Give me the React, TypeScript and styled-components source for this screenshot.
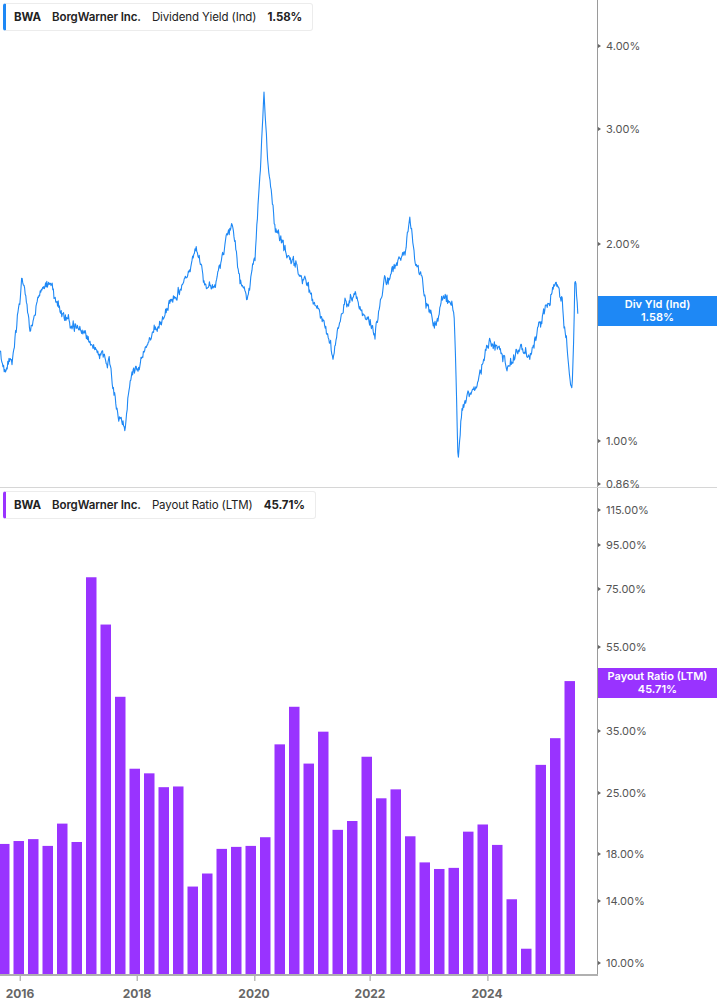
import React from 'react'
import styled, { createGlobalStyle } from 'styled-components'

const GlobalStyle = createGlobalStyle`
	html, body { margin: 0; padding: 0; background: #fff; }
	body { font-family: Inter, 'Liberation Sans', sans-serif; }
`

const BLUE = '#1e88f5'
const PURPLE = '#9933ff'

// log scales measured off the axes
const yTop = (v: number) => 441 - 284.2 * Math.log(v)
const yBot = (v: number) => 963 - 185.5 * Math.log(v / 10) - 488

const keyPoints: [number, number][] = [
	[0, 1.35], [5, 1.25], [12, 1.32], [22, 1.8], [30, 1.5], [40, 1.7], [50, 1.75], [60, 1.6],
	[75, 1.5], [90, 1.42], [100, 1.35], [110, 1.3], [118, 1.12], [125, 1.06], [130, 1.25],
	[140, 1.35], [150, 1.42], [160, 1.5], [170, 1.65], [180, 1.75], [190, 1.85], [195, 2.0],
	[205, 1.72], [215, 1.7], [225, 2.0], [232, 2.15], [240, 1.75], [248, 1.68], [255, 1.95],
	[261, 2.7], [264, 3.45], [268, 2.6], [275, 2.05], [285, 1.9], [295, 1.82], [305, 1.75],
	[315, 1.6], [325, 1.45], [333, 1.35], [345, 1.62], [355, 1.7], [365, 1.55], [375, 1.45],
	[385, 1.72], [395, 1.85], [405, 1.95], [410, 2.15], [415, 1.9], [425, 1.65], [435, 1.52],
	[445, 1.65], [454, 1.58], [458, 0.95], [462, 1.12], [470, 1.2], [480, 1.3], [490, 1.45],
	[500, 1.35], [510, 1.3], [520, 1.4], [530, 1.35], [540, 1.5], [550, 1.62], [556, 1.78],
	[562, 1.62], [568, 1.35], [572, 1.22], [574, 1.5], [575, 1.82], [578, 1.58],
]

function buildLine() {
	let seed = 11
	const rnd = () => {
		seed = (seed * 16807) % 2147483647
		return seed / 2147483647 - 0.5
	}
	const pts: string[] = []
	let walk = 0
	for (let x = 0; x <= 578; x += 0.6) {
		let i = 0
		while (i < keyPoints.length - 2 && keyPoints[i + 1][0] < x) i++
		const [x0, v0] = keyPoints[i]
		const [x1, v1] = keyPoints[i + 1]
		const t = Math.min(1, Math.max(0, (x - x0) / (x1 - x0)))
		const v = v0 + (v1 - v0) * t
		walk = walk * 0.9 + rnd() * 7
		const y = yTop(v) + walk + rnd() * 6
		pts.push(`${x.toFixed(1)},${y.toFixed(1)}`)
	}
	return 'M' + pts.join('L')
}

const barValues = [
	19.0, 19.3, 19.5, 18.8, 21.2, 19.2, 80, 62, 42, 28.5, 27.8, 25.8, 25.9, 15.1, 16.2, 18.5,
	18.7, 18.8, 19.7, 32.5, 39.8, 29.3, 34.8, 20.5, 21.5, 30.4, 24.3, 25.5, 19.8, 17.2, 16.6,
	16.7, 20.3, 21.1, 18.9, 14.1, 10.8, 29.1, 33.6, 45.71,
]

const topTicks = [
	{ label: '4.00%', y: 46 }, { label: '3.00%', y: 129 }, { label: '2.00%', y: 244 },
	{ label: '1.00%', y: 441 }, { label: '0.86%', y: 484 },
]
const botTicks = ['115.00%', '95.00%', '75.00%', '55.00%', '35.00%', '25.00%', '18.00%', '14.00%', '10.00%'].map(
	(l) => ({ label: l, y: yBot(parseFloat(l)) }),
)
const years = [
	{ label: '2016', x: 20 }, { label: '2018', x: 137 }, { label: '2020', x: 254 },
	{ label: '2022', x: 370 }, { label: '2024', x: 487 },
]

const Page = styled.div`
	width: 717px;
	height: 1005px;
	display: flex;
	flex-direction: column;
	overflow: hidden;
`

const Pane = styled.div<{ $h: number; $border?: boolean }>`
	display: grid;
	grid-template-columns: 598px 1fr;
	height: ${(p) => p.$h}px;
	border-bottom: ${(p) => (p.$border ? '1px solid #d6d6d6' : 'none')};
	flex-shrink: 0;
`

const Plot = styled.div`
	position: relative;
	border-right: 1px solid #9a9a9a;
`

const Axis = styled.div`
	position: relative;
`

const TickLabel = styled.div`
	position: absolute;
	left: 0;
	transform: translateY(-50%);
	display: flex;
	align-items: center;
	gap: 5px;
	font-size: 11px;
	color: #555;
	&::before {
		content: '';
		width: 0;
		height: 0;
		border-top: 2px solid transparent;
		border-bottom: 2px solid transparent;
		border-left: 3px solid #666;
	}
`

const ValueTag = styled.div<{ $bg: string }>`
	position: absolute;
	left: 0;
	right: 0;
	background: ${(p) => p.$bg};
	color: #fff;
	font-size: 11px;
	font-weight: 600;
	text-align: center;
	line-height: 13px;
	padding: 2px 0;
`

const Legend = styled.div<{ $c: string }>`
	position: absolute;
	top: 3px;
	left: 3px;
	display: flex;
	align-items: center;
	gap: 11px;
	height: 26px;
	padding: 0 10px 0 8px;
	background: #fff;
	border: 1px solid #ececec;
	border-left: 3px solid ${(p) => p.$c};
	border-radius: 3px;
	font-size: 11.5px;
	letter-spacing: -0.1px;
	color: #222;
`

const LegendItem = styled.span<{ $w: number }>`
	font-weight: ${(p) => p.$w};
	white-space: nowrap;
`

const Chart = styled.svg`
	position: absolute;
	inset: 0;
	display: block;
`

const TimeAxis = styled.div`
	position: relative;
	width: 598px;
	height: 30px;
	border-top: 2px solid #b0b0b0;
`

const YearLabel = styled.div`
	position: absolute;
	top: 10px;
	transform: translateX(-50%);
	font-size: 12px;
	font-weight: 700;
	color: #666;
	&::before {
		content: '';
		position: absolute;
		top: -10px;
		left: 50%;
		width: 1px;
		height: 5px;
		background: #999;
	}
`

export default function App() {
	const line = buildLine()
	return (
		<Page>
			<GlobalStyle />
			<Pane $h={487} $border>
				<Plot>
					<Chart width={597} height={487}>
						<path d={line} fill="none" stroke={BLUE} strokeWidth={1.1} strokeLinejoin="round" />
					</Chart>
					<Legend $c={BLUE}>
						<LegendItem $w={700}>BWA</LegendItem>
						<LegendItem $w={600}>BorgWarner Inc.</LegendItem>
						<LegendItem $w={400}>Dividend Yield (Ind)</LegendItem>
						<LegendItem $w={700}>1.58%</LegendItem>
					</Legend>
				</Plot>
				<Axis>
					{topTicks.map((t) => (
						<TickLabel key={t.label} style={{ top: t.y }}>
							{t.label}
						</TickLabel>
					))}
					<ValueTag $bg={BLUE} style={{ top: 296 }}>
						Div Yld (Ind)
						<br />
						1.58%
					</ValueTag>
				</Axis>
			</Pane>
			<Pane $h={486}>
				<Plot>
					<Chart width={597} height={486}>
						{barValues.map((v, i) => {
							const y = yBot(v)
							return <rect key={i} x={-1 + i * 14.5} y={y} width={10.5} height={486 - y} fill={PURPLE} />
						})}
					</Chart>
					<Legend $c={PURPLE}>
						<LegendItem $w={700}>BWA</LegendItem>
						<LegendItem $w={600}>BorgWarner Inc.</LegendItem>
						<LegendItem $w={400}>Payout Ratio (LTM)</LegendItem>
						<LegendItem $w={700}>45.71%</LegendItem>
					</Legend>
				</Plot>
				<Axis>
					{botTicks.map((t) => (
						<TickLabel key={t.label} style={{ top: t.y }}>
							{t.label}
						</TickLabel>
					))}
					<ValueTag $bg={PURPLE} style={{ top: 180 }}>
						Payout Ratio (LTM)
						<br />
						45.71%
					</ValueTag>
				</Axis>
			</Pane>
			<TimeAxis>
				{years.map((y) => (
					<YearLabel key={y.label} style={{ left: y.x }}>
						{y.label}
					</YearLabel>
				))}
			</TimeAxis>
		</Page>
	)
}
